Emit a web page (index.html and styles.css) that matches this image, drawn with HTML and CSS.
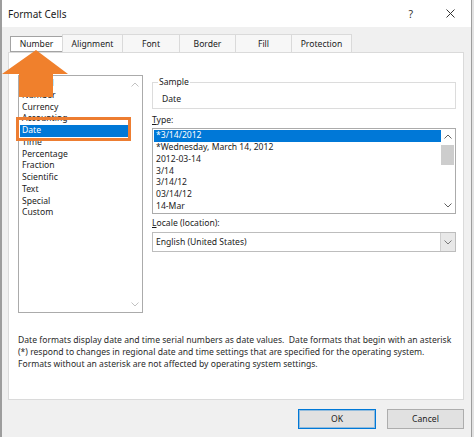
FILE: index.html
```html
<!DOCTYPE html>
<html>
<head>
<meta charset="utf-8">
<link rel="stylesheet" href="styles.css">
</head>
<body>
<div class="window">
  <div class="titlebar">
    <span class="title">Format Cells</span>
    <span class="help">?</span>
    <svg class="close" width="9" height="9" viewBox="0 0 9 9"><path d="M0.5 0.5 L8.5 8.5 M8.5 0.5 L0.5 8.5" stroke="#333" stroke-width="1" fill="none"/></svg>
  </div>
  <div class="tabs">
    <div class="tab active w-number">Number</div>
    <div class="tab w-align">Alignment</div>
    <div class="tab w-font">Font</div>
    <div class="tab w-border">Border</div>
    <div class="tab w-fill">Fill</div>
    <div class="tab w-prot">Protection</div>
  </div>
  <div class="panel">
    <div class="main">
      <div class="category">
        <div class="items">
          <div class="item">General</div>
          <div class="item">Number</div>
          <div class="item">Currency</div>
          <div class="item">Accounting</div>
          <div class="item selected">Date</div>
          <div class="item">Time</div>
          <div class="item">Percentage</div>
          <div class="item">Fraction</div>
          <div class="item">Scientific</div>
          <div class="item">Text</div>
          <div class="item">Special</div>
          <div class="item">Custom</div>
        </div>
        <div class="scroll light">
          <svg width="8" height="5" viewBox="0 0 8 5"><path d="M0.5 4.5 L4 1 L7.5 4.5" stroke="#c2c2c2" fill="none"/></svg>
          <svg width="8" height="5" viewBox="0 0 8 5"><path d="M0.5 0.5 L4 4 L7.5 0.5" stroke="#c2c2c2" fill="none"/></svg>
        </div>
      </div>
      <div class="right">
        <fieldset class="sample">
          <legend>Sample</legend>
          <div class="sample-value">Date</div>
        </fieldset>
        <div class="label"><u>T</u>ype:</div>
        <div class="typelist">
          <div class="items">
            <div class="item selected">*3/14/2012</div>
            <div class="item">*Wednesday, March 14, 2012</div>
            <div class="item">2012-03-14</div>
            <div class="item">3/14</div>
            <div class="item">3/14/12</div>
            <div class="item">03/14/12</div>
            <div class="item">14-Mar</div>
          </div>
          <div class="vscroll">
            <div class="arrowbox"><svg width="8" height="5" viewBox="0 0 8 5"><path d="M0.5 4.5 L4 1 L7.5 4.5" stroke="#606060" fill="none"/></svg></div>
            <div class="thumb"></div>
            <div class="track"></div>
            <div class="arrowbox"><svg width="8" height="5" viewBox="0 0 8 5"><path d="M0.5 0.5 L4 4 L7.5 0.5" stroke="#606060" fill="none"/></svg></div>
          </div>
        </div>
        <div class="label locale"><u>L</u>ocale (location):</div>
        <div class="combo">
          <span class="combo-text">English (United States)</span>
          <span class="dropbtn"><svg width="8" height="5" viewBox="0 0 8 5"><path d="M0.5 0.5 L4 4 L7.5 0.5" stroke="#7a7a7a" fill="none"/></svg></span>
        </div>
      </div>
    </div>
    <p class="desc">Date formats display date and time serial numbers as date values.&nbsp; Date formats that begin with an asterisk<br>(*) respond to changes in regional date and time settings that are specified for the operating system.<br>Formats without an asterisk are not affected by operating system settings.</p>
  </div>
  <div class="footer">
    <button class="btn default">OK</button>
    <button class="btn cancel">Cancel</button>
  </div>
  <svg class="arrow" width="80" height="100" viewBox="0 0 80 100"><polygon points="36,50 68,74 53,74 53,97 19,97 19,74 2,74" fill="#f0802c"/></svg>
  <div class="highlight"></div>
</div>
</body>
</html>
```
FILE: styles.css
```css
body {
  margin: 0;
  background: #e2e2e2;
  font-family: "Noto Sans", "Open Sans", sans-serif;
  font-size: 8.6px;
  color: #1b1b1b;
}

.window {
  position: relative;
  width: 469px;
  height: 437px;
  border-left: 2px solid #9d9d9d;
  border-right: 1px solid #9d9d9d;
  background: #f0f0f0;
  display: flex;
  flex-direction: column;
}

.titlebar {
  height: 27px;
  flex: none;
  background: #fff;
  display: flex;
  align-items: center;
  padding-left: 6px;
}

.title {
  flex: 1;
  font-size: 10px;
  color: #1b1b1b;
}

.help {
  font-size: 10.5px;
  color: #333;
  margin-right: 33px;
}

.close {
  margin-right: 16px;
}

.tabs {
  display: flex;
  align-items: flex-end;
  height: 18px;
  flex: none;
  margin-top: 7px;
  padding-left: 8px;
}

.tab {
  height: 18px;
  box-sizing: border-box;
  border: 1px solid #dadada;
  border-bottom: none;
  margin-left: -1px;
  background: #f7f7f7;
  display: flex;
  align-items: center;
  justify-content: center;
}

.tab.active {
  height: 16px;
  margin-left: 0;
  background: #fff;
  border: 1px solid #a3a3a3;
}

.w-number { width: 53px; }
.w-align { width: 61px; }
.w-font { width: 58px; }
.w-border { width: 57px; }
.w-fill { width: 57px; }
.w-prot { width: 61px; }

.panel {
  margin-left: 6px;
  width: 456px;
  height: 348px;
  flex: none;
  box-sizing: border-box;
  border: 1px solid #dadada;
  background: #fff;
  padding: 22px 7px 0 9px;
}

.main {
  display: flex;
  gap: 9px;
}

.category {
  width: 125px;
  height: 238px;
  box-sizing: border-box;
  border: 1px solid #ababab;
  display: flex;
}

.items {
  flex: 1;
  padding: 2px 0 0 1px;
}

.item {
  height: 11.75px;
  line-height: 11.75px;
  padding-left: 2px;
  white-space: nowrap;
}

.item.selected {
  background: #0078d7;
  color: #fff;
}

.scroll {
  width: 14px;
  display: flex;
  flex-direction: column;
  justify-content: space-between;
  align-items: center;
  padding: 6px 0 5px;
}

.right {
  width: 304px;
  padding-top: 2px;
}

.sample {
  margin: 0;
  border: 1px solid #dcdcdc;
  padding: 0 0 2px 5px;
  min-width: 0;
}

.sample legend {
  padding: 0 1px;
  line-height: 11.75px;
}

.sample-value {
  padding: 5px 0 0 4px;
  line-height: 11.75px;
}

.label {
  margin: 6px 0 2px;
  line-height: 11.75px;
}

.label.locale {
  margin: 4px 0 2px;
}

.typelist {
  height: 86px;
  box-sizing: border-box;
  border: 1px solid #ababab;
  display: flex;
}

.typelist .items {
  padding: 1px 0 0 1px;
}

.vscroll {
  width: 14px;
  display: flex;
  flex-direction: column;
}

.arrowbox {
  height: 15px;
  display: flex;
  align-items: center;
  justify-content: center;
}

.thumb {
  height: 20px;
  margin: 1px 1px 0 0;
  background: #cdcdcd;
}

.track {
  flex: 1;
}

.combo {
  height: 20px;
  box-sizing: border-box;
  border: 1px solid #bdbdbd;
  display: flex;
  align-items: center;
}

.combo-text {
  flex: 1;
  padding-left: 3px;
}

.dropbtn {
  width: 15px;
  height: 100%;
  box-sizing: border-box;
  background: #e8e8e8;
  border-left: 1px solid #cfcfcf;
  display: flex;
  align-items: center;
  justify-content: center;
}

.desc {
  margin: 21px 0 0;
  line-height: 12px;
  white-space: nowrap;
  color: #2a2a2a;
}

.footer {
  display: flex;
  justify-content: flex-end;
  gap: 11px;
  padding: 9px 7px 0 0;
}

.btn {
  height: 20px;
  box-sizing: border-box;
  background: #e1e1e1;
  border: 1px solid #adadad;
  font: inherit;
  color: #1b1b1b;
  padding: 0;
}

.btn.default {
  width: 78px;
  border: 1px solid #0078d7;
  box-shadow: inset 0 0 0 1px rgba(0, 120, 215, 0.35);
}

.btn.cancel {
  width: 77px;
}

.arrow {
  position: absolute;
  left: -2px;
  top: 0;
}

.highlight {
  position: absolute;
  left: 14px;
  top: 117px;
  width: 115px;
  height: 24px;
  box-sizing: border-box;
  border: 3px solid #ed7d31;
}
```
